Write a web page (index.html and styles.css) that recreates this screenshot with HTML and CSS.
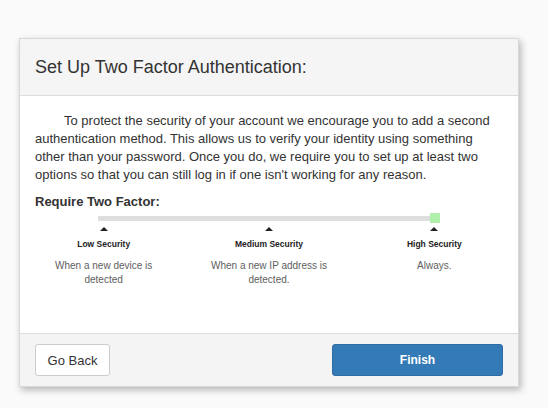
FILE: index.html
```html
<!DOCTYPE html>
<html>
<head>
<meta charset="utf-8">
<link rel="stylesheet" href="styles.css">
</head>
<body>
<div class="card">
  <div class="card-header">
    <h3 class="title">Set Up Two Factor Authentication:</h3>
  </div>
  <div class="card-body">
    <p class="intro">To protect the security of your account we encourage you to add a second authentication method. This allows us to verify your identity using something other than your password. Once you do, we require you to set up at least two options so that you can still log in if one isn't working for any reason.</p>
    <h4 class="section">Require Two Factor:</h4>
    <div class="slider">
      <div class="track"></div>
      <div class="handle"></div>
    </div>
    <div class="levels">
      <div class="level">
        <div class="tick"></div>
        <div class="label">Low Security</div>
        <div class="desc">When a new device is detected</div>
      </div>
      <div class="level">
        <div class="tick"></div>
        <div class="label">Medium Security</div>
        <div class="desc">When a new IP address is detected.</div>
      </div>
      <div class="level">
        <div class="tick"></div>
        <div class="label">High Security</div>
        <div class="desc">Always.</div>
      </div>
    </div>
  </div>
  <div class="card-footer">
    <button class="btn btn-default">Go Back</button>
    <button class="btn btn-primary">Finish</button>
  </div>
</div>
</body>
</html>
```
FILE: styles.css
```css
html, body {
  margin: 0;
  padding: 0;
}
body {
  background: #fafafa;
  font-family: "Liberation Sans", Arial, Helvetica, sans-serif;
  color: #333;
  padding: 38px 0 0 19px;
  width: 548px;
  height: 408px;
  box-sizing: border-box;
}
.card {
  width: 500px;
  box-sizing: border-box;
  background: #fff;
  border: 1px solid #d8d8d8;
  box-shadow: 2px 3px 7px rgba(0, 0, 0, 0.28);
}
.card-header {
  background: #f5f5f5;
  border-bottom: 1px solid #ddd;
  padding: 15px 15px 14px;
}
.title {
  margin: 0;
  font-size: 18px;
  font-weight: normal;
  line-height: 27px;
  color: #333;
}
.card-body {
  padding: 16px 15px 46px;
}
.intro {
  margin: 0 0 9px;
  font-size: 13px;
  line-height: 18px;
  text-indent: 29px;
}
.section {
  margin: 0;
  font-size: 13px;
  line-height: 18px;
  font-weight: bold;
}
.slider {
  margin: 2px auto 0;
  width: 342px;
  height: 10px;
  display: flex;
  align-items: center;
}
.track {
  flex: 1;
  height: 5px;
  background: #dedede;
}
.handle {
  width: 10px;
  height: 10px;
  background: #b1f0ab;
}
.levels {
  display: grid;
  grid-template-columns: repeat(3, 1fr);
  margin: 4px -14px 0;
}
.level {
  display: flex;
  flex-direction: column;
  align-items: center;
  text-align: center;
}
.tick {
  width: 0;
  height: 0;
  border-left: 4px solid transparent;
  border-right: 4px solid transparent;
  border-bottom: 4px solid #222;
}
.label {
  margin-top: 7px;
  font-size: 8.5px;
  line-height: 12px;
  font-weight: bold;
  color: #222;
}
.desc {
  margin-top: 9px;
  width: 130px;
  font-size: 10px;
  line-height: 14px;
  color: #5e5e5e;
}
.card-footer {
  background: #f4f4f4;
  border-top: 1px solid #ddd;
  padding: 10px 15px 10px;
  display: flex;
  justify-content: space-between;
}
.btn {
  font-family: "Liberation Sans", Arial, Helvetica, sans-serif;
  height: 32px;
  border-radius: 3px;
  font-size: 13px;
  padding: 0;
  cursor: pointer;
}
.btn-default {
  width: 75px;
  background: #fff;
  border: 1px solid #ccc;
  color: #333;
}
.btn-primary {
  width: 171px;
  background: #337ab7;
  border: 1px solid #2e6da4;
  color: #fff;
  font-weight: bold;
  font-size: 12px;
}
```
